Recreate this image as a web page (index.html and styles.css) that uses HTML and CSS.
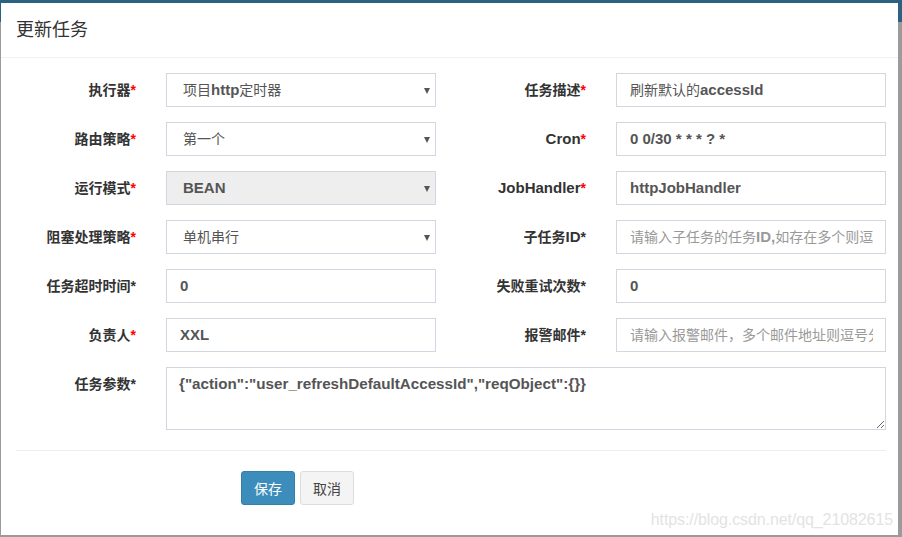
FILE: index.html
```html
<!DOCTYPE html>
<html lang="zh-CN">
<head>
<meta charset="utf-8">
<title>更新任务</title>
<link rel="stylesheet" href="styles.css">
</head>
<body>
<div class="modal">
  <div class="modal-header"><h4 class="title">更新任务</h4></div>
  <div class="modal-body">
    <div class="row">
      <label class="lbl">执行器<span class="req">*</span></label>
      <div class="col"><div class="ctl select"><div class="txt">项目<b>http</b>定时器</div><i class="caret"></i></div></div>
      <label class="lbl">任务描述<span class="req">*</span></label>
      <div class="col"><div class="ctl"><div class="txt">刷新默认的<b>accessId</b></div></div></div>
    </div>
    <div class="row">
      <label class="lbl">路由策略<span class="req">*</span></label>
      <div class="col"><div class="ctl select"><div class="txt">第一个</div><i class="caret"></i></div></div>
      <label class="lbl"><span class="en">Cron</span><span class="req">*</span></label>
      <div class="col"><div class="ctl"><div class="txt"><b>0 0/30 * * * ? *</b></div></div></div>
    </div>
    <div class="row">
      <label class="lbl">运行模式<span class="req">*</span></label>
      <div class="col"><div class="ctl select disabled"><div class="txt"><b>BEAN</b></div><i class="caret"></i></div></div>
      <label class="lbl"><span class="en">JobHandler</span><span class="req">*</span></label>
      <div class="col"><div class="ctl"><div class="txt"><b>httpJobHandler</b></div></div></div>
    </div>
    <div class="row">
      <label class="lbl">阻塞处理策略<span class="req">*</span></label>
      <div class="col"><div class="ctl select"><div class="txt">单机串行</div><i class="caret"></i></div></div>
      <label class="lbl">子任务<span class="en">ID</span>*</label>
      <div class="col"><div class="ctl placeholder"><div class="txt">请输入子任务的任务<b>ID,</b>如存在多个则逗号分隔</div></div></div>
    </div>
    <div class="row">
      <label class="lbl">任务超时时间*</label>
      <div class="col"><div class="ctl"><div class="txt"><b>0</b></div></div></div>
      <label class="lbl">失败重试次数*</label>
      <div class="col"><div class="ctl"><div class="txt"><b>0</b></div></div></div>
    </div>
    <div class="row">
      <label class="lbl">负责人<span class="req">*</span></label>
      <div class="col"><div class="ctl"><div class="txt"><b>XXL</b></div></div></div>
      <label class="lbl">报警邮件*</label>
      <div class="col"><div class="ctl placeholder"><div class="txt">请输入报警邮件，多个邮件地址则逗号分隔</div></div></div>
    </div>
    <div class="row row-wide">
      <label class="lbl">任务参数*</label>
      <div class="col-wide"><textarea class="area" readonly>{"action":"user_refreshDefaultAccessId","reqObject":{}}</textarea></div>
    </div>
    <hr class="divider">
    <div class="actions">
      <button class="btn btn-primary" type="button">保存</button>
      <button class="btn btn-default" type="button">取消</button>
    </div>
  </div>
  <div class="watermark">https://blog.csdn.net/qq_21082615</div>
</div>
</body>
</html>
```
FILE: styles.css
```css
html, body {
  margin: 0;
  padding: 0;
}
body {
  width: 902px;
  height: 537px;
  overflow: hidden;
  background: linear-gradient(#2b6181 0, #2b6181 22px, #9b9b9b 22px);
  font-family: "Liberation Sans", "Noto Sans CJK SC", sans-serif;
  font-size: 14px;
  color: #333;
}
.modal {
  position: relative;
  margin-left: 1px;
  width: 897px;
  height: 532px;
  background: #fff;
  border-top: 3px solid #2b6181;
}
.modal-header {
  height: 54px;
  border-bottom: 1px solid #f0f0f0;
  display: flex;
  align-items: center;
  padding-left: 15px;
}
.title {
  margin: 0 0 4px 0;
  font-size: 18px;
  font-weight: normal;
  color: #333;
}
.modal-body {
  padding-top: 15px;
}
.row {
  display: grid;
  grid-template-columns: 150px 300px 150px 300px;
  height: 34px;
  margin-bottom: 15px;
}
.row-wide {
  grid-template-columns: 150px 750px;
  height: 63px;
}
.lbl {
  text-align: right;
  padding-right: 15px;
  font-weight: bold;
  line-height: 34px;
  color: #333;
  white-space: nowrap;
}
.en {
  font-size: 15px;
}
.req {
  color: #f00;
}
.col, .col-wide {
  padding: 0 15px;
}
.ctl {
  position: relative;
  height: 34px;
  box-sizing: border-box;
  border: 1px solid #d2d6de;
  padding: 0 12px 0 13px;
  line-height: 32px;
  color: #555;
}
.txt {
  white-space: nowrap;
  overflow: hidden;
}
.ctl b {
  font-weight: bold;
  font-size: 15px;
}
.select {
  padding-left: 16px;
}
.disabled {
  background: #eee;
}
.placeholder {
  color: #999;
}
.caret {
  position: absolute;
  right: 5px;
  top: 14px;
  width: 0;
  height: 0;
  border-left: 3.5px solid transparent;
  border-right: 3.5px solid transparent;
  border-top: 6px solid #555;
}
.area {
  display: block;
  width: 720px;
  height: 63px;
  box-sizing: border-box;
  margin: 0;
  border: 1px solid #d2d6de;
  border-radius: 0;
  padding: 6px 12px;
  font-family: "Liberation Sans", sans-serif;
  font-weight: bold;
  font-size: 15.2px;
  line-height: 20px;
  color: #555;
  resize: both;
  outline: none;
}
.divider {
  margin: 20px 15px 0 15px;
  border: 0;
  border-top: 1px solid #eee;
  width: 870px;
}
.actions {
  padding: 20px 0 0 240px;
  display: flex;
  gap: 5px;
}
.btn {
  height: 34px;
  padding: 0 12px;
  font-family: "Liberation Sans", "Noto Sans CJK SC", sans-serif;
  font-size: 14px;
  border-radius: 3px;
  border: 1px solid;
  cursor: pointer;
}
.btn-primary {
  background: #3c8dbc;
  border-color: #367fa9;
  color: #fff;
}
.btn-default {
  background: #f4f4f4;
  border-color: #ddd;
  color: #444;
}
.watermark {
  position: absolute;
  right: 5px;
  bottom: 6px;
  font-family: "Liberation Sans", sans-serif;
  font-size: 16px;
  color: #e3e3e3;
  letter-spacing: -0.1px;
}
```
